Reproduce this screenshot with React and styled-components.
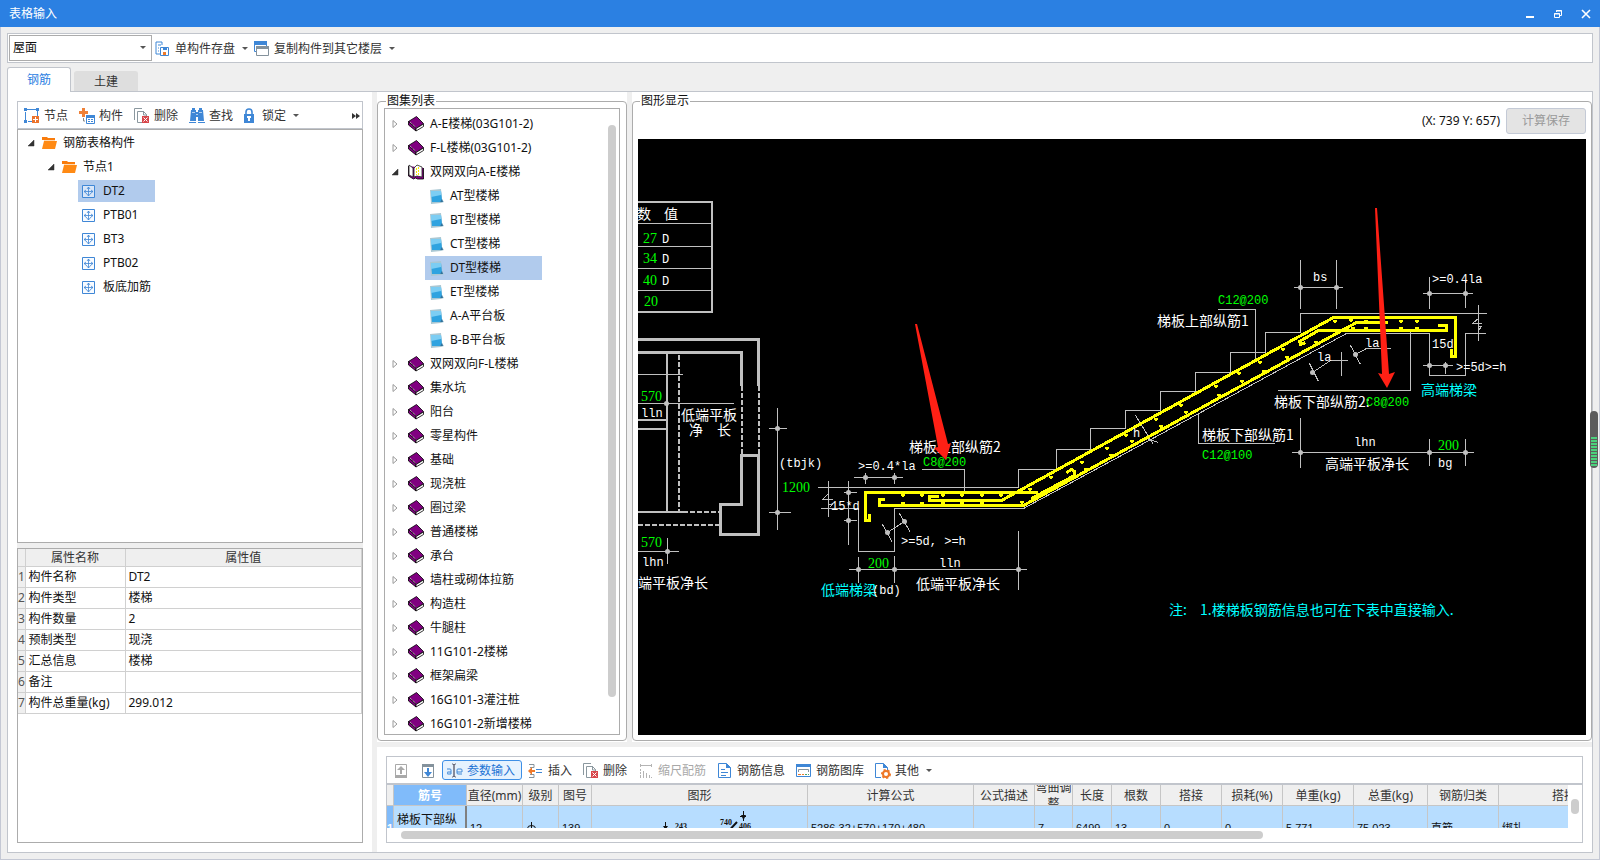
import React, { useState } from 'react';
import styled, { createGlobalStyle, css } from 'styled-components';

const style = {
	'theme-color': '#2b80e2',
	'icon-color': '#3f87d6',
	'background-color': '#efefef',
	'border-color': '#c1c5cc',
	'box-border': '#acacac',
	'select-color': '#b1cbed',
	'font-family': '"Noto Sans", "Noto Sans CJK SC", sans-serif'
};

const GlobalStyle = createGlobalStyle`
	* {
		box-sizing: border-box;
	}
	body {
		margin: 0;
		color: #111;
		font: 12px/18px ${style['font-family']};
	}
	button, select, input {
		font: inherit;
		color: inherit;
	}
	ul {
		margin: 0;
		padding: 0;
		list-style: none;
	}
	li {
		display: flow-root;
	}
`;

const Window = styled.div`
	position: relative;
	display: flex;
	flex-direction: column;
	height: 100vh;
	overflow: hidden;
	background: ${style['background-color']};
`;

const TitleBar = styled.header`
	display: flex;
	justify-content: space-between;
	flex: none;
	height: 27px;
	padding-left: 9px;
	background: ${style['theme-color']};
	color: #fff;
	h1 {
		margin: 0;
		font-size: 12px;
		font-weight: normal;
		line-height: 27px;
	}
`;

const WindowButton = styled.button`
	width: 28px;
	height: 27px;
	padding: 0;
	border: 0;
	background: none;
	svg {
		display: block;
		margin: auto;
	}
`;

const Body = styled.div`
	display: flex;
	flex-direction: column;
	flex: 1;
	min-height: 0;
	padding: 6px;
	border: 1px solid #c4c8d4;
	border-top: 0;
`;

const TopBar = styled.div`
	display: flex;
	align-items: center;
	flex: none;
	height: 30px;
	padding: 0 1px;
	border: 1px solid ${style['border-color']};
	background: #fff;
`;

const Combo = styled.label`
	display: flex;
	align-items: center;
	width: 143px;
	height: 26px;
	padding-right: 5px;
	border: 1px solid ${style['box-border']};
	select {
		flex: 1;
		height: 24px;
		padding: 0 3px;
		border: 0;
		outline: 0;
		appearance: none;
		background: none;
	}
`;

const ToolButton = styled.button`
	display: flex;
	align-items: center;
	flex: none;
	gap: 4px;
	min-width: 26px;
	height: 20px;
	padding: 2px ${props => (props.$compact ? 2 : 4)}px 0;
	border: 1px solid transparent;
	border-radius: 3px;
	background: none;
	color: #333;
	white-space: nowrap;
	svg {
		flex: none;
	}
	&:disabled {
		color: #a8a8a8;
	}
	${props => props.$caret && css`
		> svg:last-child {
			margin-left: 3px;
		}
	`}
	${props => props.$active && css`
		padding-right: 6px;
		border-color: #3d8fe6;
		background: #e6f2fe;
		color: #1f74d4;
	`}
`;

const Tabs = styled.div`
	display: flex;
	align-items: flex-end;
	flex: none;
	gap: 3px;
	height: 28px;
`;

const Tab = styled.button`
	width: 64px;
	height: ${props => (props.$active ? 25 : 20)}px;
	margin-bottom: ${props => (props.$active ? -1 : 0)}px;
	padding: 0;
	border: 1px solid ${props => (props.$active ? style['border-color'] : '#dedede')};
	border-bottom: 0;
	border-radius: 3px 3px 0 0;
	background: ${props => (props.$active ? '#fff' : '#dedede')};
	color: ${props => (props.$active ? style['theme-color'] : '#333')};
	z-index: 1;
`;

const Workspace = styled.div`
	display: flex;
	flex: 1;
	min-height: 0;
	border: 1px solid ${style['border-color']};
	background: #fff;
`;

const Side = styled.aside`
	display: flex;
	flex-direction: column;
	flex: none;
	width: 364px;
	padding: 9px;
`;

const Splitter = styled.div`
	flex: none;
	width: ${props => (props.$row ? 'auto' : '5px')};
	height: ${props => (props.$row ? '5px' : 'auto')};
	background: ${style['background-color']};
`;

const SideTools = styled.div`
	display: flex;
	align-items: center;
	flex: none;
	gap: 1px;
	height: 28px;
	padding: 0 1px;
	border: 1px solid ${style['border-color']};
	.more {
		justify-content: flex-end;
		margin-left: auto;
		padding-right: 0;
	}
`;

const TreeBox = styled.div`
	flex: 1;
	min-height: 0;
	padding-top: 1px;
	overflow: hidden;
	border: 1px solid ${style['box-border']};
`;

const TreeRow = styled.button`
	display: flex;
	align-items: center;
	width: max-content;
	height: ${props => props.$height || 24}px;
	margin: ${props => (24 - (props.$height || 24)) / 2}px 0;
	margin-left: ${props => props.$indent}px;
	padding: 0 ${props => props.$end || 4}px 0 ${props => props.$start || 0}px;
	border: 0;
	background: ${props => (props.$selected ? style['select-color'] : 'none')};
	color: #111;
	white-space: nowrap;
	.arrow {
		margin-right: ${props => props.$arrowGap || 7}px;
	}
	.icon {
		flex: none;
		margin-right: ${props => props.$gap || 6}px;
	}
`;

const PropertyBox = styled.div`
	flex: none;
	height: 295px;
	border: 1px solid ${style['box-border']};
`;

const PropertyTable = styled.table`
	width: 100%;
	table-layout: fixed;
	border-collapse: collapse;
	th, td {
		height: 21px;
		padding: 0 3px;
		overflow: hidden;
		border-right: 1px solid #d0d0d0;
		border-bottom: 1px solid #d0d0d0;
		font-weight: normal;
		line-height: 18px;
		text-align: left;
		white-space: nowrap;
	}
	thead th {
		height: 17px;
		padding-top: 2px;
		background: ${style['background-color']};
		color: #333;
		line-height: 14px;
		text-align: center;
	}
	tbody th:first-child {
		padding: 0;
		background: ${style['background-color']};
		color: #555;
	}
`;

const Main = styled.main`
	display: flex;
	flex-direction: column;
	flex: 1;
	min-width: 0;
`;

const Upper = styled.div`
	display: flex;
	flex: 1;
	min-height: 0;
`;

const Group = styled.fieldset`
	display: flex;
	flex-direction: column;
	flex: ${props => (props.$width ? 'none' : 1)};
	width: ${props => (props.$width ? `${props.$width}px` : 'auto')};
	min-width: 0;
	margin: 2px 0 1px;
	padding: 0 ${props => props.$side}px 5px;
	border: 1px solid ${style['box-border']};
	border-radius: 4px;
	legend {
		margin-left: 2px;
		padding: 0 1px;
		line-height: 14px;
	}
`;

const GalleryBox = styled.div`
	display: flex;
	flex: 1;
	min-height: 0;
	border: 1px solid ${style['box-border']};
	ul {
		flex: 1;
		padding-top: 3px;
		overflow: hidden;
	}
	ul ul {
		padding: 0;
	}
`;

const Thumb = styled.div`
	flex: none;
	width: 8px;
	margin: 16px 3px 37px 0;
	border-radius: 4px;
	background: #cdcdcd;
`;

const DrawingHead = styled.div`
	display: flex;
	align-items: center;
	justify-content: flex-end;
	flex: none;
	gap: 6px;
	height: 31px;
	padding-bottom: 6px;
`;

const SaveButton = styled.button`
	width: 80px;
	height: 26px;
	border: 1px solid #c4cad6;
	border-radius: 3px;
	background: #e4e4e4;
	&:disabled {
		color: #9a9a9a;
	}
`;

const Canvas = styled.div`
	flex: 1;
	min-height: 0;
	background: #000;
	svg {
		display: block;
		width: 100%;
		height: 100%;
	}
	.grey {
		stroke: #c0c0c0;
	}
	.grey-fill {
		fill: #c0c0c0;
	}
	.bar {
		stroke: #ff0;
		stroke-width: 3;
	}
	text {
		fill: #fff;
		font: 14px "Noto Sans CJK SC", sans-serif;
	}
	text.mono {
		font: 12px "Liberation Mono", monospace;
	}
	text.digit {
		font: 14px "Liberation Serif", serif;
	}
	text.green {
		fill: #0f0;
	}
	text.cyan {
		fill: #0ff;
	}
`;

const Lower = styled.div`
	flex: none;
	padding: 9px;
`;

const DetailBox = styled.div`
	height: 87px;
	border: 1px solid ${style['border-color']};
`;

const DetailTools = styled.div`
	display: flex;
	align-items: center;
	gap: 1px;
	height: 28px;
	padding-left: 1px;
	border-bottom: 2px solid ${style['border-color']};
`;

const DetailView = styled.div`
	display: flex;
	height: 43px;
	.table-clip {
		flex: 1;
		min-width: 0;
		overflow: hidden;
	}
	.thumb {
		flex: none;
		width: 8px;
		height: 15px;
		margin: 14px 3px 0;
		border-radius: 4px;
		background: #cdcdcd;
	}
`;

const DetailTable = styled.table`
	width: 1267px;
	table-layout: fixed;
	border-collapse: separate;
	border-spacing: 0;
	th, td {
		padding: 0;
		border-right: 1px solid #c6c6c6;
		font-weight: normal;
	}
	thead th {
		height: 21px;
		border-bottom: 1px solid #c6c6c6;
		background: ${style['background-color']};
		color: #333;
		white-space: nowrap;
	}
	thead th > div {
		display: flex;
		align-items: center;
		justify-content: center;
		height: 20px;
		padding-top: 2px;
		overflow: hidden;
		line-height: 16px;
		text-align: center;
		white-space: normal;
	}
	thead th.current {
		background: #80bbfa;
		color: #fff;
		font-weight: bold;
	}
	tbody td, tbody th {
		height: 44px;
		padding: 0 3px;
		background: #b7ddff;
		text-align: left;
		font-family: "Liberation Sans", "Noto Sans CJK SC", sans-serif;
		font-size: 11px;
	}
	tbody th {
		padding: 0;
		background: #80bbfa;
		color: #fff;
		font-weight: bold;
	}
	tbody td.name {
		padding-top: 2px;
		border-right: 2px solid #808080;
		font-size: 12px;
	}
	tbody td.shape {
		padding: 0;
	}
	svg {
		display: block;
	}
`;

const HorizontalScroll = styled.div`
	padding: 3px 16px 0 14px;
	div {
		width: 74%;
		height: 8px;
		border-radius: 4px;
		background: #cdcdcd;
	}
`;

// 浮在窗口右边缘的音量条
const Gauge = styled.div`
	position: absolute;
	top: 411px;
	right: 2px;
	width: 8px;
	height: 57px;
	padding: 26px 1px 2px;
	border-radius: 4px;
	background: #5c5c5c;
	div {
		height: 100%;
		background: repeating-linear-gradient(#4bd07c 0 2px, #5c5c5c 2px 3px);
	}
`;

const blue = style['icon-color'];

const Caret = () => (
	<svg width="6" height="4" viewBox="0 0 6 4"><path d="M0 0h6L3 3z" fill="#555" /></svg>
);

const iconShapes = {
	store: (
		<>
			<path d="M1 1h6v3M1 1v12h4M3 4h3M3 7h1M3 10h1" fill="none" stroke={blue} />
			<path d="M5.5 6.5h8v8h-8z" fill="#fff" stroke={blue} />
			<path d="M8 6h4v3H8z" fill={blue} />
			<path d="M8 11h3v3H8z" fill="#ef7a2a" />
		</>
	),
	copy: (
		<>
			<path d="M.5 1.5h12v9H.5z" fill="#fff" stroke={blue} />
			<path d="M0 0h13v4H0z" fill={blue} />
			<path d="M2.5 5.5h12v9h-12z" fill="#fff" stroke="#84929c" />
			<path d="M2 5h13v3H2z" fill="#84929c" />
		</>
	),
	node: (
		<>
			<path d="M3 1.5h9M1.5 4v8M13.5 3v5M4 13.5h4" fill="none" stroke={blue} />
			<path d="M0 0h3v3H0zM12 0h3v3h-3zM0 12h3v3H0z" fill={blue} />
			<path d="M8 8h7v7H8z" fill="#ec732c" />
			<path d="M9 11.5h5M11.5 9v5" stroke="#fff" />
		</>
	),
	component: (
		<>
			<path d="M0 3h3V0h3v3h3v3H6v3H3V6H0z" fill="#ef8138" />
			<path d="M7.5 7.5h8v8h-8z" fill="#fff" stroke={blue} />
			<path d="M7 7h9v3H7z" fill={blue} />
			<path d="M9 11.5h2M12 11.5h2M9 13.5h2M12 13.5h2" stroke={blue} />
			<path d="M4.5 10v3H6" fill="none" stroke="#888" />
		</>
	),
	remove: (
		<>
			<path d="M.5 12V.5H8" fill="none" stroke="#8b989f" />
			<path d="M3.5 3.5h6l3 3v8h-9z" fill="#fff" stroke="#8b989f" />
			<path d="M9.5 3v4H13" fill="none" stroke="#8b989f" />
			<path d="M8 8h7v7H8z" fill="#d8474b" />
			<path d="M9.5 9.5l4 4M13.5 9.5l-4 4" stroke="#fff" />
		</>
	),
	find: (
		<>
			<path d="M3 0h3v2h1v2h2V2h1V0h3v2h1l1 11H9V9H7v4H1L2 2h1zM0 14h7v1H0zM9 14h7v1H9z" fill={blue} />
			<path d="M3 4.5h3M10 4.5h3M7 6.5h2" stroke="#fff" strokeWidth=".6" />
		</>
	),
	lock: (
		<>
			<path d="M4 7V4a3 3 0 0 1 6 0v3" fill="none" stroke={blue} strokeWidth="1.6" />
			<path d="M2 6h10v9H2z" fill={blue} />
			<path d="M5 8h4v2H8v3H6v-3H5z" fill="#fff" />
		</>
	),
	up: (
		<>
			<path d="M2.5 1.5h11v12h-11z" fill="#fff" stroke="#a9a9a9" />
			<path d="M2 12h12v3H2z" fill="#a9a9a9" />
			<path d="M8 3l4 4H9v4H7V7H4z" fill="#a9a9a9" />
		</>
	),
	down: (
		<>
			<path d="M2.5 1.5h11v13h-11z" fill="#fff" stroke="#84929c" />
			<path d="M2 1h12v3H2z" fill="#84929c" />
			<path d="M8 14L4 9h3V5h2v4h3z" fill={blue} />
		</>
	),
	param: (
		<>
			<path d="M0 6h3q1 0 1 1v4H1q-1 0-1-1t1-1h3M10 9h5V7q0-1-1-1h-3q-1 0-1 1v3q0 1 1 1h4" fill="none" stroke={blue} />
			<path d="M5 1h1l1 1v11l-1 1H5M9 1H8L7 2v11l1 1h1" fill="none" stroke="#667" />
		</>
	),
	insert: (
		<>
			<path d="M1 1.5h5v3H2M1 14.5h5v-3H2" fill="none" stroke="#84929c" />
			<path d="M0 8l4-4v3h3v2H4v3z" fill="#ef7a2a" />
			<path d="M8 6.5h6M8 9.5h6" stroke={blue} />
		</>
	),
	scale: (
		<path
			d="M2.5 1v3M13.5 1v3M3 2.5h10M2.5 6v2M2.5 9v2M2.5 12v3M5.5 8v7M8.5 10v5M11.5 12v3M13.5 14v1"
			fill="none"
			stroke="#b4b4b4"
		/>
	),
	info: (
		<>
			<path d="M1.5.5h8l4 4v10h-12z" fill="#fff" stroke={blue} />
			<path d="M9 0v5h5z" fill={blue} />
			<path d="M4 6.5h4M4 9.5h7M4 12.5h5" stroke={blue} />
		</>
	),
	library: (
		<>
			<path d="M.5 1.5h14v12H.5z" fill="#fff" stroke={blue} />
			<path d="M0 1h15v3H0z" fill={blue} />
			<path d="M2.5 9V6.5h10V9" fill="none" stroke="#84929c" />
			<path d="M2 11.5h3M6 11.5h2" stroke="#ef7a2a" />
			<path d="M9 11.5h2M12 11.5h1" stroke="#4aa568" />
		</>
	),
	other: (
		<>
			<path d="M6 14.5H.5V.5h8l4 4V8" fill="none" stroke={blue} />
			<path d="M8 0v5h5z" fill={blue} />
			<circle cx="11" cy="11" r="3" fill="#fff" stroke="#ee7828" strokeWidth="2" />
			<circle cx="11" cy="11" r="4" fill="none" stroke="#ee7828" strokeWidth="2" strokeDasharray="2 2" />
		</>
	)
};

const Icon = ({ name }) => (
	<svg width="16" height="16" viewBox="0 0 16 16" aria-hidden="true">{iconShapes[name]}</svg>
);

const Arrow = ({ open }) => (
	<svg className="arrow" width="7" height="8" viewBox="0 0 7 8">
		{open
			? <path d="M6 1v6H0z" fill="#333" stroke="#333" strokeWidth=".5" />
			: <path d="M1 .5v7L5 4z" fill="#fff" stroke="#9a9a9a" />}
	</svg>
);

const Folder = () => (
	<svg className="icon" width="15" height="14" viewBox="0 0 15 14">
		<path d="M0 13V1h5l1 1h7v2H0z" fill="#f97c0c" />
		<path d="M2 5h13l-2 8H0z" fill="#ff8a14" />
		<path d="M2 4.5h11" stroke="#ffd9b0" />
	</svg>
);

const Leaf = () => (
	<svg className="icon" width="13" height="13" viewBox="0 0 13 13">
		<path d="M.5.5h12v12H.5z" fill="#f4f9ff" fillOpacity=".6" stroke={blue} />
		<path d="M6.5 2v9M2 6.5h9" stroke={blue} strokeWidth=".8" />
		<path
			d="M6.5 2L5 4M6.5 2L8 4M4 5L2 6.5 4 8M9 5l2 1.5L9 8M4 8l2.5 3L9 8"
			fill="none"
			stroke={blue}
			strokeWidth=".8"
		/>
	</svg>
);

const Book = () => (
	<svg className="icon" width="16" height="16" viewBox="0 0 16 16">
		<path d="M.5 5.5L8.5.5l7 7-7 5z" fill="#800080" stroke="#000" strokeWidth=".8" />
		<path d="M.5 5.5V9L8 15v-2.5z" fill="#800080" stroke="#000" strokeWidth=".8" />
		<path d="M8 12.5L15.5 8v2.5L8 15z" fill="#fff" stroke="#000" strokeWidth=".8" />
		<path d="M2 6l6 5.5" fill="none" stroke="#fff" strokeWidth=".8" strokeDasharray="1 1" />
	</svg>
);

const OpenBook = () => (
	<svg className="icon" width="16" height="16" viewBox="0 0 16 16">
		<path d="M.5 2v10l5 3 2-1 2 1h6V4" fill="#800080" stroke="#000" strokeWidth=".8" />
		<path d="M1 1l4 3v9l-4-2zM6 4l3-3 5 2v10l-5-1-3 1z" fill="#fff" stroke="#222" strokeWidth=".8" />
		<path d="M8.5 4v7M10.5 3v8" stroke="#f4e600" strokeDasharray="2 1" />
	</svg>
);

const Page = () => (
	<svg className="icon" width="14" height="15" viewBox="0 0 14 15">
		<path d="M0 1l11-1 1 10 2 3-3 1-10 1z" fill="#a9c7d3" />
		<path d="M1 2h10l1 9-2 2H2z" fill="#2fa3e0" />
		<path d="M1 2h10v4L1 8z" fill="#7ccdf3" />
		<path d="M10 13l2-3 1 3z" fill="#2f6f9a" />
	</svg>
);

// 三级钢符号
const Rebar = () => (
	<svg width="11" height="14" viewBox="0 0 11 14">
		<path d="M5.5 1v13M2 12.5h7" stroke="#111" />
		<ellipse cx="5.5" cy="7.5" rx="4" ry="3" fill="none" stroke="#111" />
	</svg>
);

const components = ['DT2', 'PTB01', 'BT3', 'PTB02', '板底加筋'];

const properties = [
	['构件名称', 'DT2'],
	['构件类型', '楼梯'],
	['构件数量', '2'],
	['预制类型', '现浇'],
	['汇总信息', '楼梯'],
	['备注', ''],
	['构件总重量(kg)', '299.012']
];

const gallery = [
	{ name: 'A-E楼梯(03G101-2)' },
	{ name: 'F-L楼梯(03G101-2)' },
	{
		name: '双网双向A-E楼梯',
		children: ['AT型楼梯', 'BT型楼梯', 'CT型楼梯', 'DT型楼梯', 'ET型楼梯', 'A-A平台板', 'B-B平台板']
	},
	{ name: '双网双向F-L楼梯' },
	{ name: '集水坑' },
	{ name: '阳台' },
	{ name: '零星构件' },
	{ name: '基础' },
	{ name: '现浇桩' },
	{ name: '圈过梁' },
	{ name: '普通楼梯' },
	{ name: '承台' },
	{ name: '墙柱或砌体拉筋' },
	{ name: '构造柱' },
	{ name: '牛腿柱' },
	{ name: '11G101-2楼梯' },
	{ name: '框架扁梁' },
	{ name: '16G101-3灌注桩' },
	{ name: '16G101-2新增楼梯' }
];

const columns = [
	{ name: '筋号', width: 73, value: '梯板下部纵筋1' },
	{ name: '直径(mm)', width: 56, value: '12' },
	{ name: '级别', width: 36, value: <Rebar /> },
	{ name: '图号', width: 33, value: '139' },
	{ name: '图形', width: 216 },
	{ name: '计算公式', width: 166, value: '5286.32+570+170+480' },
	{ name: '公式描述', width: 61, value: '' },
	{ name: '弯曲调整', width: 38, value: '7' },
	{ name: '长度', width: 39, value: '6499' },
	{ name: '根数', width: 49, value: '13' },
	{ name: '搭接', width: 61, value: '0' },
	{ name: '损耗(%)', width: 61, value: '0' },
	{ name: '单重(kg)', width: 71, value: '5.771' },
	{ name: '总重(kg)', width: 74, value: '75.023' },
	{ name: '钢筋归类', width: 71, value: '直筋' },
	{ name: '搭接形式', width: 155, value: '绑扎' }
];

// [x, y, 文字, 样式]
const labels = [
	[637, 219, '数'], [664, 219, '值'],
	[643, 243, '27', 'digit green'], [662, 243, 'D', 'mono'],
	[643, 263, '34', 'digit green'], [662, 263, 'D', 'mono'],
	[643, 285, '40', 'digit green'], [662, 285, 'D', 'mono'],
	[644, 306, '20', 'digit green'],
	[641, 401, '570', 'digit green'], [641, 417, 'lln', 'mono'],
	[681, 420, '低端平板'], [689, 435, '净'], [717, 435, '长'],
	[779, 467, '(tbjk)', 'mono'], [782, 492, '1200', 'digit green'],
	[641, 547, '570', 'digit green'], [642, 566, 'lhn', 'mono'],
	[638, 588, '端平板净长'],
	[909, 452, '梯板上部纵筋2'], [923, 466, 'C8@200', 'mono green'],
	[858, 470, '>=0.4*la', 'mono'], [831, 510, '15*d', 'mono'],
	[901, 545, '>=5d, >=h', 'mono'],
	[868, 568, '200', 'digit green'], [939, 567, 'lln', 'mono'],
	[916, 589, '低端平板净长'], [821, 595, '低端梯梁', 'cyan'], [872, 594, '(bd)', 'mono'],
	[1218, 304, 'C12@200', 'mono green'], [1157, 326, '梯板上部纵筋1'],
	[1202, 440, '梯板下部纵筋1'], [1202, 459, 'C12@100', 'mono green'],
	[1133, 437, 'h', 'mono'],
	[1313, 281, 'bs', 'mono'], [1432, 283, '>=0.4la', 'mono'],
	[1365, 347, 'la', 'mono'], [1317, 361, 'la', 'mono'],
	[1432, 348, '15d', 'mono'], [1456, 371, '>=5d>=h', 'mono'],
	[1421, 395, '高端梯梁', 'cyan'],
	[1274, 407, '梯板下部纵筋2:'], [1366, 406, 'C8@200', 'mono green'],
	[1354, 446, 'lhn', 'mono'], [1438, 450, '200', 'digit green'], [1438, 467, 'bg', 'mono'],
	[1325, 469, '高端平板净长'],
	[1169, 615, '注:', 'cyan'], [1200, 615, '1.楼梯板钢筋信息也可在下表中直接输入.', 'cyan']
];

const thinLines = [
	// 数值表
	'M637 223H711M637 246H711M637 268H711M637 290H711',
	// 平面图尺寸线
	'M637 374H682M637 403H733M777 407V529M768 428H786M768 512H790M637 551H678M667 537V563',
	// 踏步
	'M817 487H1018V469H1056V449H1090V428H1125V410H1160V391H1195V372H1230V352H1265V332H1300V313H1486',
	// 板底
	'M820 508H858V551H894V508H1023L1346 333H1429V375H1465V333H1485',
	// 低端
	'M921 469H964V491M853 477H902M865 472V483M894 472V483M828 480V516M848 480V544M843 492H856M843 520H856',
	'M828 493L822 499H832M828 504H832L829 507M882 524L892 542M899 513L910 532M887 532L904 521',
	'M848 569H1026M858 556V582M894 555V582M1018 530V589',
	// 斜段
	'M1217 309H1255V358M1198 412V443H1274M1135 415L1153 444M1132 427L1147 421M1146 438L1158 442M1139 423L1170 406',
	// 高端
	'M1293 287H1342M1300 259V308M1336 259V308M1422 293H1472M1429 276V308M1465 280V307M1478 304V340',
	'M1479 317L1472 323H1481M1477 326H1481L1478 330M1422 365H1452M1445 361V373',
	'M1355 354L1366 348H1390M1350 345L1360 364M1312 372L1330 360H1347M1309 363L1318 381M1341 351V375',
	'M1277 390H1410V330M1291 452H1473M1300 417V467M1429 438V465M1465 438V465'
];

const dots = [
	[666, 403], [777, 428], [777, 512], [667, 551], [865, 477], [894, 477], [848, 492], [848, 520],
	[887, 532], [904, 521], [858, 569], [894, 569], [1018, 569], [1300, 287], [1336, 287],
	[1429, 293], [1465, 293], [1429, 365], [1445, 365], [1355, 354], [1312, 372], [1300, 452],
	[1429, 452], [1465, 452]
];

// 分布筋断面
const sections = [
	[902, 494], [921, 494], [942, 494], [961, 494], [981, 494], [1000, 494],
	[902, 502], [921, 502], [942, 502], [961, 502], [981, 502], [1021, 501],
	[1029, 488], [1050, 476], [1081, 461], [1106, 447], [1125, 434], [1155, 418], [1180, 404],
	[1215, 385], [1238, 372], [1259, 361], [1282, 348],
	[1056, 484], [1085, 468], [1110, 454], [1131, 440], [1160, 425], [1185, 411], [1218, 394],
	[1241, 380], [1263, 370], [1286, 356], [1315, 341],
	[1334, 320], [1350, 319], [1365, 320], [1400, 320], [1416, 320],
	[1352, 327], [1365, 327], [1400, 327], [1416, 327]
];

function StairDrawing() {
	return (
		<svg viewBox="638 139 948 597" preserveAspectRatio="xMinYMin slice" role="img" aria-label="DT型楼梯">
			<g transform="translate(0.5 0.5)" fill="none" shapeRendering="crispEdges">
				{thinLines.map(d => <path key={d} className="grey" d={d} />)}
				<path className="grey" strokeWidth="2" d="M637 201H711V311H637M666 353V511M637 419H666M637 428H666M637 511H682" />
				<path className="grey" strokeWidth="3" d="M637 339H758V385M637 352H741V385M741 504V455H758V534H720V504H742" />
				<path
					className="grey"
					strokeWidth="2"
					strokeDasharray="5 2"
					d="M741 385V455M758 385V455M678 354V511M682 511H720M637 524H720"
				/>
				<path className="bar" d="M869 513V520H865V492H1037" />
				<path className="bar" d="M884 499H879V505H1023L1356 322H1387" />
				<path className="bar" d="M938 496H929V500H1001L1333 317H1455V356H1451V348" />
				<path className="bar" d="M1031 498L1074 475V471L1071 469L1066 472" />
				<path className="bar" d="M1305 342L1300 344L1299 341L1318 330H1446V325H1437" />
				{sections.map(([x, y]) => (
					<path key={`${x}-${y}`} d={`M${x - 2} ${y}h4M${x} ${y - 1}v3`} stroke="#ff0" strokeWidth="2" />
				))}
			</g>
			<g transform="translate(0.5 0.5)">
				{dots.map(([x, y]) => <circle key={`${x}-${y}`} className="grey-fill" cx={x} cy={y} r="2.5" />)}
			</g>
			{labels.map(([x, y, text, name]) => (
				<text key={`${x}-${y}`} x={x} y={y} className={name}>{text}</text>
			))}
			<path d="M915 324H917L948 444L951 443L946 460L934 448L938 447Z" fill="#ff2015" />
			<path d="M1375 208H1377L1389 374L1395 372L1387 388L1378 373L1382 374Z" fill="#ff2015" />
		</svg>
	);
}

function BarShape() {
	return (
		<svg width="215" height="44" viewBox="0 0 215 44">
			<path d="M73.5 16v12M151.5 5v10M148 10.5h6" stroke="#111" />
			<path d="M71 20h5l-2 3h-1zM149 9h5l-2 4h-1z" fill="#111" />
			<path d="M73 30H132L145 16" fill="none" stroke="#111" strokeWidth="2" />
			<g fontFamily="Liberation Serif" fontSize="8" fontWeight="bold" fill="#111">
				<text x="83" y="23">243</text>
				<text x="128" y="19">740</text>
				<text x="147" y="23">406</text>
			</g>
		</svg>
	);
}

function App() {
	const [tab, setTab] = useState('钢筋');
	const [component, setComponent] = useState('DT2');
	const [stair, setStair] = useState('DT型楼梯');

	return (
		<Window>
			<GlobalStyle />
			<TitleBar>
				<h1>表格输入</h1>
				<div>
					<WindowButton aria-label="最小化">
						<svg width="10" height="10" viewBox="0 0 10 10"><path d="M1 7h8v2H1z" fill="#fff" /></svg>
					</WindowButton>
					<WindowButton aria-label="还原">
						<svg width="10" height="10" viewBox="0 0 10 10" fill="none" stroke="#fff">
							<path d="M3.5 3V1.5h5v5H7M3 2h6M1.5 4.5h5v4h-5zM1 5h6" />
						</svg>
					</WindowButton>
					<WindowButton aria-label="关闭">
						<svg width="10" height="10" viewBox="0 0 10 10"><path d="M1 1l8 8M9 1L1 9" stroke="#fff" strokeWidth="1.6" /></svg>
					</WindowButton>
				</div>
			</TitleBar>
			<Body>
				<TopBar>
					<Combo>
						<select aria-label="楼层" defaultValue="屋面">
							<option>屋面</option>
						</select>
						<Caret />
					</Combo>
					<ToolButton $caret $compact><Icon name="store" />单构件存盘<Caret /></ToolButton>
					<ToolButton $caret $compact><Icon name="copy" />复制构件到其它楼层<Caret /></ToolButton>
				</TopBar>
				<Tabs role="tablist">
					{['钢筋', '土建'].map(name => (
						<Tab key={name} role="tab" aria-selected={tab === name} $active={tab === name} onClick={() => setTab(name)}>
							{name}
						</Tab>
					))}
				</Tabs>
				<Workspace>
					<Side>
						<SideTools>
							<ToolButton><Icon name="node" />节点</ToolButton>
							<ToolButton><Icon name="component" />构件</ToolButton>
							<ToolButton><Icon name="remove" />删除</ToolButton>
							<ToolButton><Icon name="find" />查找</ToolButton>
							<ToolButton $caret $compact><Icon name="lock" />锁定<Caret /></ToolButton>
							<ToolButton className="more" aria-label="更多">
								<svg width="8" height="6" viewBox="0 0 8 6"><path d="M0 0l4 3-4 3zM4 0l4 3-4 3z" fill="#333" /></svg>
							</ToolButton>
						</SideTools>
						<TreeBox>
							<ul>
								<li>
									<TreeRow $indent={10}><Arrow open /><Folder />钢筋表格构件</TreeRow>
									<ul>
										<li>
											<TreeRow $indent={30}><Arrow open /><Folder />节点1</TreeRow>
											<ul>
												{components.map(name => (
													<li key={name}>
														<TreeRow
															$indent={60}
															$height={22}
															$start={4}
															$gap={8}
															$end={30}
															$selected={component === name}
															onClick={() => setComponent(name)}
														>
															<Leaf />{name}
														</TreeRow>
													</li>
												))}
											</ul>
										</li>
									</ul>
								</li>
							</ul>
						</TreeBox>
						<Splitter $row />
						<PropertyBox>
							<PropertyTable>
								<colgroup>
									<col width="7" />
									<col width="100" />
									<col />
								</colgroup>
								<thead>
									<tr><th /><th>属性名称</th><th>属性值</th></tr>
								</thead>
								<tbody>
									{properties.map(([name, value], index) => (
										<tr key={name}>
											<th>{index + 1}</th>
											<td>{name}</td>
											<td>{value}</td>
										</tr>
									))}
								</tbody>
							</PropertyTable>
						</PropertyBox>
					</Side>
					<Splitter />
					<Main>
						<Upper>
							<Group $width={250} $side={6}>
								<legend>图集列表</legend>
								<GalleryBox>
									<ul>
										{gallery.map(item => (
											<li key={item.name}>
												<TreeRow $indent={7} $arrowGap={9}>
													<Arrow open={Boolean(item.children)} />
													{item.children ? <OpenBook /> : <Book />}
													{item.name}
												</TreeRow>
												{item.children && (
													<ul>
														{item.children.map(name => (
															<li key={name}>
																<TreeRow
																	$indent={40}
																	$start={5}
																	$end={41}
																	$selected={stair === name}
																	onClick={() => setStair(name)}
																>
																	<Page />{name}
																</TreeRow>
															</li>
														))}
													</ul>
												)}
											</li>
										))}
									</ul>
									<Thumb />
								</GalleryBox>
							</Group>
							<Splitter />
							<Group $side={5}>
								<legend>图形显示</legend>
								<DrawingHead>
									<span>(X: 739 Y: 657)</span>
									<SaveButton disabled>计算保存</SaveButton>
								</DrawingHead>
								<Canvas><StairDrawing /></Canvas>
							</Group>
						</Upper>
						<Splitter $row />
						<Lower>
							<DetailBox>
								<DetailTools>
									<ToolButton disabled aria-label="上移"><Icon name="up" /></ToolButton>
									<ToolButton aria-label="下移"><Icon name="down" /></ToolButton>
									<ToolButton $active><Icon name="param" />参数输入</ToolButton>
									<ToolButton><Icon name="insert" />插入</ToolButton>
									<ToolButton><Icon name="remove" />删除</ToolButton>
									<ToolButton disabled><Icon name="scale" />缩尺配筋</ToolButton>
									<ToolButton><Icon name="info" />钢筋信息</ToolButton>
									<ToolButton><Icon name="library" />钢筋图库</ToolButton>
									<ToolButton $caret><Icon name="other" />其他<Caret /></ToolButton>
								</DetailTools>
								<DetailView>
									<div className="table-clip">
										<DetailTable>
											<colgroup>
												<col width="7" />
												{columns.map(col => <col key={col.name} width={col.width} />)}
											</colgroup>
											<thead>
												<tr>
													<th />
													{columns.map((col, index) => (
														<th key={col.name} className={index === 0 ? 'current' : undefined}>
															<div>{col.name}</div>
														</th>
													))}
												</tr>
											</thead>
											<tbody>
												<tr>
													<th>1</th>
													{columns.map((col, index) => (
														col.name === '图形'
															? <td key={col.name} className="shape"><BarShape /></td>
															: <td key={col.name} className={index === 0 ? 'name' : undefined}>{col.value}</td>
													))}
												</tr>
											</tbody>
										</DetailTable>
									</div>
									<div className="thumb" />
								</DetailView>
								<HorizontalScroll><div /></HorizontalScroll>
							</DetailBox>
						</Lower>
					</Main>
				</Workspace>
			</Body>
			<Gauge><div /></Gauge>
		</Window>
	);
}

export default App;
